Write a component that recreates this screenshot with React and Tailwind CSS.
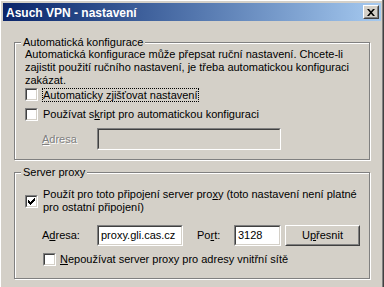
import React from 'react';

const font = { fontFamily: '"Liberation Sans", Arial, sans-serif' };

const Checkbox = ({ checked }) => (
  <div className="w-[13px] h-[13px] shrink-0 border border-t-[#808080] border-l-[#808080] border-b-white border-r-white">
    <div className="w-full h-full bg-white border border-t-[#404040] border-l-[#404040] border-b-[#d4d0c8] border-r-[#d4d0c8] flex items-center justify-center">
      {checked && (
        <svg width="7" height="7" viewBox="0 0 7 7">
          <path d="M0 2h1v1h1v1h1v-1h1v-1h1v-1h1v-1h1v3h-1v1h-1v1h-1v1h-1v1h-1v-1h-1v-1h-1z" fill="#000" />
        </svg>
      )}
    </div>
  </div>
);

const Sunken = ({ className, disabled, children }) => (
  <div className={`border border-t-[#808080] border-l-[#808080] border-b-white border-r-white ${className}`}>
    <div className={`w-full h-full border border-t-[#404040] border-l-[#404040] border-b-[#d4d0c8] border-r-[#d4d0c8] flex items-center px-[2px] ${disabled ? 'bg-[#d4d0c8]' : 'bg-white'}`}>
      {children}
    </div>
  </div>
);

const GroupBox = ({ title, className, children }) => (
  <fieldset className={`border border-[#808080] shadow-[1px_1px_0_#fff,inset_1px_1px_0_#fff] ${className}`}>
    <legend className="ml-[6px] px-[2px] h-[13px] leading-[13px] bg-[#d4d0c8]">{title}</legend>
    {children}
  </fieldset>
);

export default function App() {
  return (
    <div
      className="w-[384px] h-[287px] bg-[#d4d0c8] text-[11px] leading-[13px] text-black overflow-hidden flex"
      style={font}
    >
      <div className="flex-1 pt-[3px] pl-[3px] shadow-[inset_1px_1px_0_#fff] flex flex-col">
        <div className="h-[18px] mr-[1px] bg-linear-to-r from-[#0a246a] to-[#a6caf0] flex items-center justify-between pl-[3px] pr-[2px]">
          <span className="text-white font-bold text-[12px] leading-[14px] mt-[1px]">Asuch VPN - nastavení</span>
          <div className="w-[16px] h-[14px] border border-t-white border-l-white border-b-[#404040] border-r-[#404040] bg-[#d4d0c8]">
            <div className="w-full h-full border border-t-[#d4d0c8] border-l-[#d4d0c8] border-b-[#808080] border-r-[#808080] flex items-center justify-center">
              <svg width="8" height="7" viewBox="0 0 8 7">
                <path d="M0 0h2l2 2.2L6 0h2L5 3.5 8 7H6L4 4.8 2 7H0l3-3.5z" fill="#000" />
              </svg>
            </div>
          </div>
        </div>

        <div className="pl-[11px] pt-[15px]">
          <GroupBox title="Automatická konfigurace" className="w-[356px] h-[124px]">
            <div className="pl-[10px] -mt-[1px]">
              <p className="whitespace-nowrap">
                Automatická konfigurace může přepsat ruční nastavení. Chcete-li<br />
                zajistit použití ručního nastavení, je třeba automatickou konfiguraci<br />
                zakázat.
              </p>
              <div className="flex items-center gap-[4px] mt-[1px] h-[13px]">
                <Checkbox />
                <span className="border border-dotted border-black leading-[12px] whitespace-nowrap">
                  Automaticky z<u>j</u>išťovat nastavení
                </span>
              </div>
              <div className="flex items-center gap-[5px] mt-[7px] h-[13px]">
                <Checkbox />
                <span className="whitespace-nowrap">Používat s<u>k</u>ript pro automatickou konfiguraci</span>
              </div>
              <div className="flex items-center mt-[7px] h-[22px]">
                <span className="w-[72px] shrink-0 pl-[17px] text-[#808080] [text-shadow:1px_1px_0_#fff]">
                  <u>A</u>dresa
                </span>
                <Sunken disabled className="w-[184px] h-[22px]" />
              </div>
            </div>
          </GroupBox>

          <GroupBox title="Server proxy" className="w-[356px] h-[113px] mt-[6px]">
            <div className="pl-[10px]">
              <div className="flex items-center gap-[5px] mt-[9px]">
                <Checkbox checked />
                <span className="whitespace-nowrap">
                  Použít pro toto připojení server pro<u>x</u>y (toto nastavení není platné<br />
                  pro ostatní připojení)
                </span>
              </div>
              <div className="flex items-center mt-[10px] h-[22px]">
                <span className="w-[72px] shrink-0 pl-[17px] whitespace-nowrap">
                  A<u>d</u>resa:
                </span>
                <Sunken className="w-[86px] h-[21px] shrink-0">proxy.gli.cas.cz</Sunken>
                <span className="ml-[14px] w-[37px] shrink-0">Po<u>r</u>t:</span>
                <Sunken className="w-[47px] h-[21px] shrink-0">3128</Sunken>
                <div className="ml-[4px] w-[75px] h-[21px] shrink-0 border border-t-white border-l-white border-b-[#404040] border-r-[#404040]">
                  <div className="w-full h-full border border-t-[#d4d0c8] border-l-[#d4d0c8] border-b-[#808080] border-r-[#808080] flex items-center justify-center">
                    U<u>p</u>řesnit
                  </div>
                </div>
              </div>
              <div className="flex items-center gap-[4px] mt-[7px] h-[13px] pl-[18px]">
                <Checkbox />
                <span className="whitespace-nowrap"><u>N</u>epoužívat server proxy pro adresy vnitřní sítě</span>
              </div>
            </div>
          </GroupBox>
        </div>
      </div>
      <div className="w-[2px] h-full border-l border-l-[#808080] bg-[#404040]" />
    </div>
  );
}
